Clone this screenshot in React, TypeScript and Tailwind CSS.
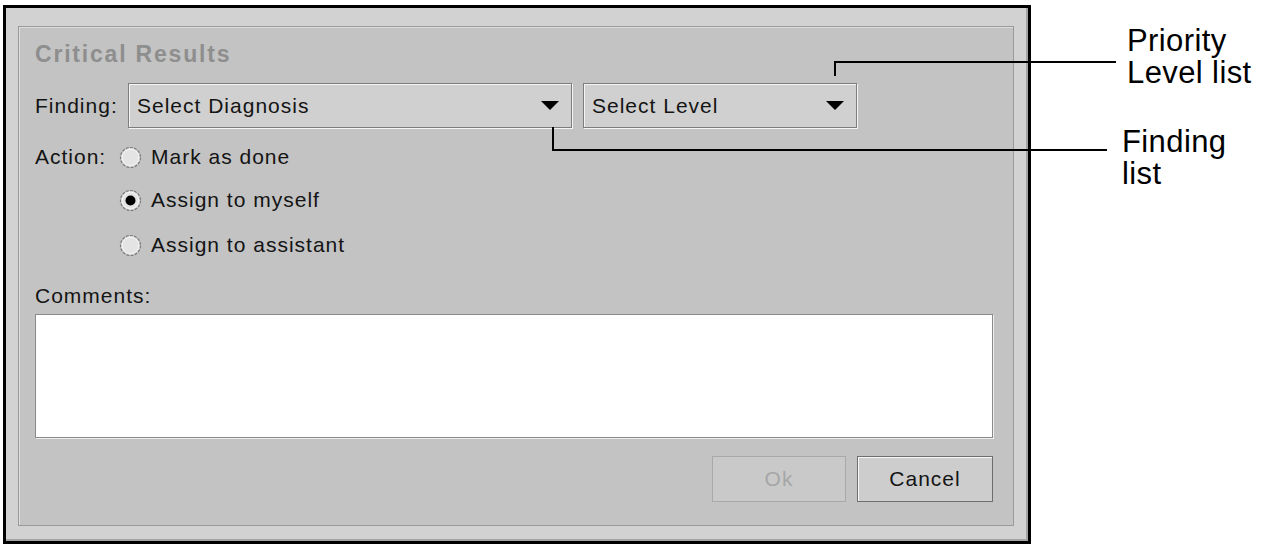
import type { ReactNode } from 'react'

const ui = "font-['Liberation_Sans',Arial,sans-serif]"
const txt = 'text-[21px] leading-[24px] tracking-[1px] text-[#141414]'

function Combo({ label, width }: { label: string; width: string }) {
  return (
    <div className={`flex h-[45px] items-center justify-between border border-[#7d7d7d] bg-[#d0d0d0] pl-[8px] pr-[12px] shadow-[inset_1px_1px_0_#f4f4f4,1px_1px_0_#f4f4f4] ${width}`}>
      <span className={txt}>{label}</span>
      <svg width="18" height="10" viewBox="0 0 18 10" aria-hidden>
        <path d="M0 0h18L9 9z" fill="#000" />
      </svg>
    </div>
  )
}

function Radio({ label, checked = false }: { label: string; checked?: boolean }) {
  return (
    <div className="flex h-[30px] items-center gap-[9px]">
      <svg width="23" height="23" viewBox="0 0 23 23" aria-hidden>
        <circle cx="11.5" cy="11.5" r="10" fill="#dcdcdc" stroke="#7a7a7a" strokeWidth="1.2" strokeDasharray="3 1.2" />
        <circle cx="11.5" cy="11.5" r="8.3" fill="#e4e4e4" stroke="#f6f6f6" strokeWidth="1" />
        {checked && <circle cx="11.5" cy="11.5" r="5" fill="#000" />}
      </svg>
      <span className={txt}>{label}</span>
    </div>
  )
}

function Button({ children, disabled = false }: { children: ReactNode; disabled?: boolean }) {
  return (
    <button
      type="button"
      className={
        disabled
          ? 'flex h-[46px] w-[134px] items-center justify-center border border-[#a9a9a9] bg-[#c9c9c9] text-[21px] leading-[24px] tracking-[1px] text-[#a6a6a6]'
          : `flex h-[46px] w-[136px] items-center justify-center border border-[#6e6e6e] bg-[#cdcdcd] shadow-[inset_1px_1px_0_#f8f8f8] ${txt}`
      }
    >
      {children}
    </button>
  )
}

export default function App() {
  return (
    <div className={`relative h-[550px] w-[1288px] bg-white ${ui}`}>
      <div className="flex">
        {/* dialog window */}
        <div className="ml-[3px] mt-[5px] h-[539px] w-[1028px] border-[3px] border-black bg-[#d2d2d2]">
          <div className="h-full border-b-2 border-r-2 border-[#a4a4a4] pl-[12px] pt-[18px]">
            <div className="flex h-[500px] w-[996px] flex-col border border-[#9a9a9a] bg-[#c3c3c3] pl-[16px] pr-[20px] pt-[15px] shadow-[inset_1px_1px_0_#dcdcdc]">
              <div className="h-[24px] text-[23px] font-bold leading-[24px] tracking-[1.8px] text-[#8e8e8e]">Critical Results</div>

              <div className="mt-[17px] flex items-center">
                <span className={`w-[93px] ${txt}`}>Finding:</span>
                <Combo label="Select Diagnosis" width="w-[444px]" />
                <div className="w-[11px]" />
                <Combo label="Select Level" width="w-[274px]" />
              </div>

              <div className="mt-[14px] flex items-center">
                <span className={`w-[84px] ${txt}`}>Action:</span>
                <Radio label="Mark as done" />
              </div>
              <div className="mt-[13px] pl-[84px]">
                <Radio label="Assign to myself" checked />
              </div>
              <div className="mt-[15px] pl-[84px]">
                <Radio label="Assign to assistant" />
              </div>

              <div className={`mt-[24px] h-[24px] ${txt}`}>Comments:</div>
              <div className="mt-[6px] h-[124px] w-[958px] border border-[#8a8a8a] bg-white shadow-[1px_1px_0_#efefef]" />

              <div className="mt-[18px] flex justify-end gap-[11px]">
                <Button disabled>Ok</Button>
                <Button>Cancel</Button>
              </div>
            </div>
          </div>
        </div>

        {/* callout captions */}
        <div className="flex flex-col text-[31px] leading-[32px] tracking-[0.4px] text-black">
          <div className="ml-[96px] mt-[25px]">
            Priority
            <br />
            Level list
          </div>
          <div className="ml-[91px] mt-[37px]">
            Finding
            <br />
            list
          </div>
        </div>
      </div>

      {/* callout leader lines */}
      <div className="absolute left-[834px] top-[61px] h-[2px] w-[282px] bg-black" />
      <div className="absolute left-[834px] top-[61px] h-[15px] w-[2px] bg-black" />
      <div className="absolute left-[552px] top-[127px] h-[24px] w-[2px] bg-black" />
      <div className="absolute left-[552px] top-[149px] h-[2px] w-[555px] bg-black" />
    </div>
  )
}
